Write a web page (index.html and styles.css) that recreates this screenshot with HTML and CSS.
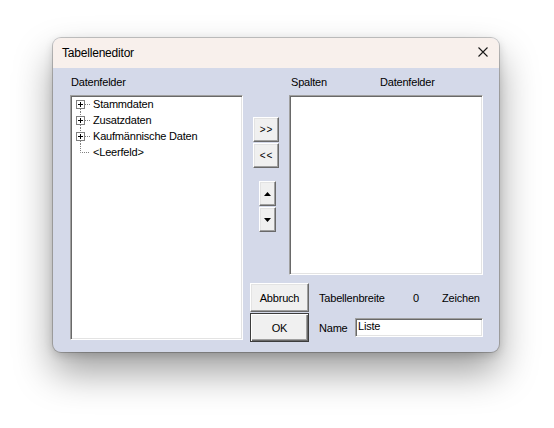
FILE: index.html
```html
<!DOCTYPE html>
<html>
<head>
<meta charset="utf-8">
<link rel="stylesheet" href="styles.css">
</head>
<body>
<div class="window">
  <div class="titlebar">
    <span class="title">Tabelleneditor</span>
    <svg class="close" width="10" height="10" viewBox="0 0 10 10"><path d="M0.5 0.5 L9.5 9.5 M9.5 0.5 L0.5 9.5" stroke="#1a1a1a" stroke-width="1.1" fill="none"/></svg>
  </div>
  <div class="content">
    <div class="left">
      <div class="label">Datenfelder</div>
      <div class="listbox tree">
        <div class="row">
          <svg class="gut" width="20" height="16" viewBox="0 0 20 16"><rect x="4.5" y="4.5" width="8" height="8" fill="#fff" stroke="#808080"/><path d="M6 8.5H11M8.5 6V11" stroke="#000"/><path d="M13 8.5H18M8.5 13V16" stroke="#808080" stroke-dasharray="1 1"/></svg>
          <span>Stammdaten</span>
        </div>
        <div class="row">
          <svg class="gut" width="20" height="16" viewBox="0 0 20 16"><rect x="4.5" y="4.5" width="8" height="8" fill="#fff" stroke="#808080"/><path d="M6 8.5H11M8.5 6V11" stroke="#000"/><path d="M13 8.5H18M8.5 0V4M8.5 13V16" stroke="#808080" stroke-dasharray="1 1"/></svg>
          <span>Zusatzdaten</span>
        </div>
        <div class="row">
          <svg class="gut" width="20" height="16" viewBox="0 0 20 16"><rect x="4.5" y="4.5" width="8" height="8" fill="#fff" stroke="#808080"/><path d="M6 8.5H11M8.5 6V11" stroke="#000"/><path d="M13 8.5H18M8.5 0V4M8.5 13V16" stroke="#808080" stroke-dasharray="1 1"/></svg>
          <span>Kaufmännische Daten</span>
        </div>
        <div class="row">
          <svg class="gut" width="20" height="16" viewBox="0 0 20 16"><path d="M8.5 0V8.5H18" stroke="#808080" stroke-dasharray="1 1" fill="none"/></svg>
          <span>&lt;Leerfeld&gt;</span>
        </div>
      </div>
    </div>
    <div class="right">
      <div class="top">
        <div class="movebtns">
          <div class="pair wide">
            <button class="btn mv">&gt;&gt;</button>
            <button class="btn mv">&lt;&lt;</button>
          </div>
          <div class="pair narrow">
            <button class="btn ud"><svg width="7" height="4" viewBox="0 0 7 4"><path d="M3.5 0L7 4H0Z" fill="#000"/></svg></button>
            <button class="btn ud"><svg width="7" height="4" viewBox="0 0 7 4"><path d="M0 0H7L3.5 4Z" fill="#000"/></svg></button>
          </div>
        </div>
        <div class="cols">
          <div class="headers"><span class="h1">Spalten</span><span>Datenfelder</span></div>
          <div class="listbox colbox"></div>
        </div>
      </div>
      <div class="bottom">
        <div class="actions">
          <button class="btn act">Abbruch</button>
          <button class="btn act ok">OK</button>
        </div>
        <div class="info">
          <div class="inforow">
            <span class="ilabel">Tabellenbreite</span>
            <span class="izero">0</span>
            <span>Zeichen</span>
          </div>
          <div class="inforow">
            <span class="nlabel">Name</span>
            <div class="input">Liste</div>
          </div>
        </div>
      </div>
    </div>
  </div>
</div>
</body>
</html>
```

FILE: styles.css
```css
html, body {
  margin: 0;
  padding: 0;
  background: #ffffff;
}
body {
  box-sizing: border-box;
  min-height: 428px;
  padding: 38px 0 0 53px;
  font-family: "Liberation Sans", Arial, sans-serif;
  font-size: 11px;
  letter-spacing: -0.2px;
  color: #000;
}
.window {
  width: 446px;
  height: 314px;
  box-sizing: border-box;
  background: #d4d9e9;
  border-radius: 8px;
  overflow: hidden;
  box-shadow: 0 0 0 1px rgba(0,0,0,0.2), 0 20px 38px rgba(0,0,0,0.38), 0 3px 10px rgba(0,0,0,0.16);
}
.titlebar {
  height: 30px;
  background: #f8f0ec;
  display: flex;
  align-items: center;
  justify-content: space-between;
  padding: 0 11px 0 9px;
}
.title {
  font-size: 12px;
  letter-spacing: -0.2px;
  color: #000;
  margin-top: -1px;
}
.close {
  display: block;
  margin-top: -2px;
}
.content {
  display: flex;
  padding: 8px 0 0 17px;
}
.left {
  width: 173px;
  display: flex;
  flex-direction: column;
}
.label, .headers {
  height: 13px;
  line-height: 13px;
  margin-bottom: 6px;
}
.label {
  padding-left: 1px;
}
.listbox {
  box-sizing: border-box;
  background: #fff;
  border-style: solid;
  border-width: 1px;
  border-color: #a0a0a0 #ffffff #ffffff #a0a0a0;
  box-shadow: inset 1px 1px 0 #696969, inset -1px -1px 0 #e3e3e3;
}
.tree {
  height: 245px;
  padding: 0 0 0 1px;
}
.row {
  display: flex;
  align-items: center;
  height: 16px;
}
.gut {
  display: block;
  flex: none;
  margin-right: 1px;
}
.right {
  margin-left: 7px;
  width: 233px;
  display: flex;
  flex-direction: column;
}
.top {
  display: flex;
}
.movebtns {
  width: 39px;
  display: flex;
  flex-direction: column;
}
.pair {
  display: flex;
  flex-direction: column;
  gap: 1px;
}
.wide {
  margin: 41px 0 0 3px;
}
.narrow {
  margin: 13px 0 0 9px;
}
.btn {
  box-sizing: border-box;
  padding: 0;
  margin: 0;
  font-family: "Liberation Sans", Arial, sans-serif;
  font-size: 11px;
  letter-spacing: -0.2px;
  color: #000;
  background: #f0f0f0;
  border-style: solid;
  border-width: 1px;
  border-color: #ffffff #696969 #696969 #ffffff;
  box-shadow: inset -1px -1px 0 #a0a0a0, inset 1px 1px 0 #e3e3e3;
  display: flex;
  align-items: center;
  justify-content: center;
}
.mv {
  width: 26px;
  height: 25px;
  font-size: 10px;
  letter-spacing: 1px;
  padding-left: 1px;
}
.ud {
  width: 17px;
  height: 25px;
}
.ud svg {
  display: block;
}
.cols {
  width: 194px;
  display: flex;
  flex-direction: column;
}
.headers {
  display: flex;
  padding-left: 2px;
}
.h1 {
  width: 89px;
}
.colbox {
  height: 180px;
}
.bottom {
  display: flex;
  margin-top: 8px;
}
.actions {
  width: 59px;
  display: flex;
  flex-direction: column;
  gap: 1px;
}
.act {
  width: 59px;
  height: 29px;
}
.ok {
  border: 1px solid #3c3c3c;
  box-shadow: inset 1px 1px 0 #ffffff, inset -1px -1px 0 #696969, inset -2px -2px 0 #a0a0a0;
}
.info {
  margin-left: 10px;
  display: flex;
  flex-direction: column;
  gap: 1px;
}
.inforow {
  height: 29px;
  display: flex;
  align-items: center;
}
.ilabel {
  width: 94px;
}
.izero {
  width: 29px;
}
.nlabel {
  width: 36px;
}
.input {
  box-sizing: border-box;
  width: 128px;
  height: 19px;
  line-height: 15px;
  padding-left: 2px;
  background: #fff;
  border-style: solid;
  border-width: 1px;
  border-color: #a0a0a0 #ffffff #ffffff #a0a0a0;
  box-shadow: inset 1px 1px 0 #696969, inset -1px -1px 0 #e3e3e3;
}
```
